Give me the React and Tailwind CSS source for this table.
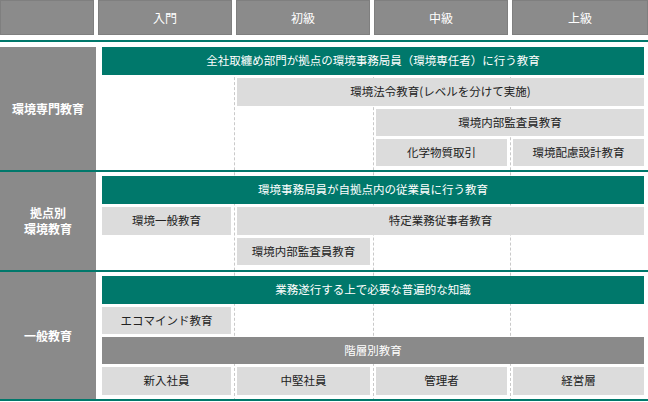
import React from "react";

const font = { fontFamily: '"Noto Sans CJK JP", "Noto Sans", sans-serif' };

function Box({ children, className = "" }) {
  return (
    <div
      className={`flex items-center justify-center bg-[#dcdcdc] text-[#222] text-[11.5px] ${className}`}
    >
      {children}
    </div>
  );
}

function Bar({ children, className = "" }) {
  return (
    <div
      className={`col-span-4 flex items-center justify-center bg-[#00786b] text-white text-[11.5px] ${className}`}
    >
      {children}
    </div>
  );
}

function Category({ children }) {
  return (
    <div className="w-[96px] shrink-0 flex flex-col items-center justify-center bg-[#8a8a8a] text-white font-bold text-[12px] leading-[16px] text-center">
      {children}
    </div>
  );
}

function Divider() {
  return <div className="h-[2px] bg-[#00786b] relative z-10" />;
}

export default function App() {
  return (
    <div className="w-[648px] h-[402px] bg-white overflow-hidden" style={font}>
      {/* Level header */}
      <div className="grid grid-cols-[94px_134px_134px_134px_136px] gap-x-[4px] h-[35px]">
        <div className="bg-[#8b8b8b] border border-[#7f7f7f]" />
        {["入門", "初級", "中級", "上級"].map((label) => (
          <div
            key={label}
            className="flex items-center justify-center bg-[#8b8b8b] border border-[#7f7f7f] text-white text-[12px]"
          >
            {label}
          </div>
        ))}
      </div>

      <div className="mt-[5px]" />
      <Divider />

      {/* Body */}
      <div className="relative">
        {/* column guides */}
        <div className="absolute inset-0 z-0">
          <div className="absolute top-0 bottom-0 left-[234px] border-l border-dashed border-[#c9c9c9]" />
          <div className="absolute top-0 bottom-0 left-[373px] border-l border-dashed border-[#c9c9c9]" />
          <div className="absolute top-0 bottom-0 left-[510px] border-l border-dashed border-[#c9c9c9]" />
        </div>

        {/* 環境専門教育 */}
        <div className="relative z-10 flex mt-[5px] h-[123px]">
          <Category>環境専門教育</Category>
          <div className="pl-[6px] pb-[4px] grid grid-cols-[129px_133px_131px_131px] grid-rows-[28px_28px_27px_27px] gap-x-[6px] gap-y-[3px]">
            <Bar>全社取纏め部門が拠点の環境事務局員（環境専任者）に行う教育</Bar>
            <Box className="col-start-2 col-span-3">環境法令教育(レベルを分けて実施)</Box>
            <Box className="col-start-3 col-span-2">環境内部監査員教育</Box>
            <Box className="col-start-3">化学物質取引</Box>
            <Box className="col-start-4">環境配慮設計教育</Box>
          </div>
        </div>
        <Divider />

        {/* 拠点別環境教育 */}
        <div className="relative z-10 flex h-[98px]">
          <Category>
            <div>拠点別</div>
            <div>環境教育</div>
          </Category>
          <div className="pl-[6px] pt-[4px] grid grid-cols-[129px_133px_131px_131px] grid-rows-[28px_28px_27px] gap-x-[6px] gap-y-[3px] content-start">
            <Bar>環境事務局員が自拠点内の従業員に行う教育</Bar>
            <Box className="col-start-1">環境一般教育</Box>
            <Box className="col-start-2 col-span-3">特定業務従事者教育</Box>
            <Box className="col-start-2">環境内部監査員教育</Box>
          </div>
        </div>
        <Divider />

        {/* 一般教育 */}
        <div className="relative z-10 flex h-[127px]">
          <Category>一般教育</Category>
          <div className="pl-[6px] pt-[4px] grid grid-cols-[129px_133px_131px_131px] grid-rows-[28px_27px_27px_28px] gap-x-[6px] gap-y-[3px] content-start">
            <Bar>業務遂行する上で必要な普遍的な知識</Bar>
            <Box className="col-start-1">エコマインド教育</Box>
            <div className="col-span-4 flex items-center justify-center bg-[#8a8a8a] text-white text-[11.5px]">
              階層別教育
            </div>
            <Box>新入社員</Box>
            <Box>中堅社員</Box>
            <Box>管理者</Box>
            <Box>経営層</Box>
          </div>
        </div>
        <Divider />
      </div>
    </div>
  );
}
